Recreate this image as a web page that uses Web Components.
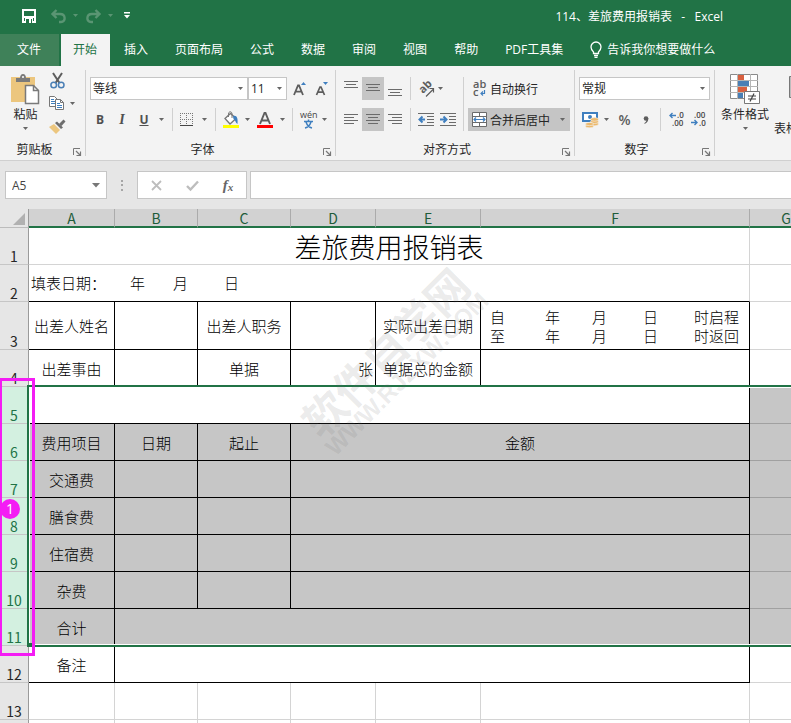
<!DOCTYPE html>
<html lang="zh-CN">
<head>
<meta charset="utf-8">
<title>114、差旅费用报销表 - Excel</title>
<style>
html, body { margin: 0; height: 100%; }
body { font-family: "Open Sans", "Noto Sans CJK SC", sans-serif; font-size: 12px; color: #262626; overflow: hidden; background: #fff; }
</style>
</head>
<body>
<excel-window></excel-window>
<script>
class XlElement extends HTMLElement {
  constructor() {
    super();
    const t = document.createElement('template');
    t.innerHTML = '<style>*{box-sizing:border-box}button,input,select{font:inherit;color:inherit;margin:0;padding:0;border:0;background:none;border-radius:0}button{display:flex;align-items:center;justify-content:center;white-space:nowrap}svg{display:block;flex:none}' + this.css() + '</style>' + this.html();
    this.attachShadow({ mode: 'open' }).append(t.content.cloneNode(true));
  }
  css() { return ':host{display:block}'; }
  html() { return '<slot></slot>'; }
  at(n, d = '') { return this.getAttribute(n) || d; }
}

const H = (x1, x2, y) => `<path d="M${x1} ${y}.5H${x2}" stroke="#6b6b6b" fill="none"/>`;
const ICONS = {
  caret: [7, 4, '<path d="M1 0h5L3.5 3z" fill="#666"/>'],
  caretw: [7, 4, '<path d="M1 0h5L3.5 3z" fill="#5a9573"/>'],
  save: [14, 14, '<path d="M1 1h12v12H1z" fill="none" stroke="#fff" stroke-width="2"/><path d="M2 7h10v2H2zM3 9h8v5H3z" fill="#fff"/><path d="M4 10h6v4H4z" fill="#217346"/><path d="M7 10h2v4H7z" fill="#fff"/>'],
  undo: [15, 14, '<path d="M5.500 1 1.500 5l4 4M2 5h7c6 0 6 8 1 8H8" fill="none" stroke="#5a9573" stroke-width="2.400"/>'],
  redo: [15, 14, '<path d="M9.500 1l4 4-4 4M13 5H6C0 5 0 13 5 13h2" fill="none" stroke="#5a9573" stroke-width="2.400"/>'],
  more: [6, 7, '<path d="M0 0h6v1.500H0zM0 3h6L3 6.500z" fill="#fff"/>'],
  bulb: [12, 17, '<path d="M3.500 12.500V11C2 9.500 1 8 1 6a5 5 0 0 1 10 0c0 2-1 3.500-2.500 5v1.500zM4 14.500h4M4.500 16.300h3" fill="none" stroke="#fff" stroke-width="1.300"/>'],
  paste: [29, 30, '<path d="M0 3h24v25H0z" fill="#ecc67e"/><path d="M5 8V4h4c0-2 1-4 3-4s3 2 3 4h4v4z" fill="#7b7b7b"/><circle cx="12" cy="3" r="1" fill="#fff"/><path d="M14.500 11.500h8l5 5v13h-13z" fill="#fff" stroke="#7a7a7a" stroke-width="1.500"/><path d="M22.500 11.500v5h5" fill="none" stroke="#7a7a7a" stroke-width="1.500"/>'],
  cut: [15, 16, '<path d="M3 0l6.500 10M12 0L5.500 10" stroke="#5d5d5d" stroke-width="2" fill="none"/><circle cx="3.700" cy="12" r="2.800" fill="none" stroke="#4a7fb5" stroke-width="1.500"/><circle cx="11.200" cy="12" r="2.800" fill="none" stroke="#4a7fb5" stroke-width="1.500"/>'],
  copy: [16, 15, '<path d="M.5.5h5l3 3v7h-8z" fill="#fff" stroke="#777"/><path d="M2 3.500h3M2 5.500h4M2 7.500h4" stroke="#3f7fbf"/><path d="M6.500 3.500h5l3 3v7h-8z" fill="#fff" stroke="#777"/><path d="M11.500 3.500v3h3" fill="none" stroke="#777"/><path d="M8 7.500h3M8 9.500h5M8 11.500h5" stroke="#3f7fbf"/>'],
  brush: [17, 15, '<path d="M0 8l5-3 6 6-4 4z" fill="#ecc67e"/><path d="M6 4l2-1.500 6 6L12 10z" fill="#6d6d6d"/><path d="M10 5l4.500-4.500 2 2L12.500 7z" fill="#6d6d6d"/>'],
  launch: [8, 8, '<path d="M.5 7V.5H7" fill="none" stroke="#777"/><path d="M3 3l4 4M7.500 3.500v4h-4" fill="none" stroke="#777" stroke-width="1.200"/>'],
  border: [14, 14, '<path d="M.5 0v13M6.500 0v13M12.500 0v13M0 .5h13M0 6.500h13" fill="none" stroke="#777" stroke-dasharray="1 1"/><path d="M0 12.500h13" stroke="#444"/>'],
  fill: [16, 16, '<path d="M2 6.500L7.500 1.500l5.500 5L7 12z" fill="#fff" stroke="#777" stroke-width="1.300"/><path d="M5.500 5V2c0-3 3.500-3 3.500 0v4" fill="none" stroke="#777"/><path d="M10 4c4-1 5 2 4.500 8-2-1-2-4-4-5z" fill="#3f7fbf"/><path d="M0 13h16v3H0z" fill="#ff0"/>'],
  fcolor: [16, 16, '<path d="M3 12L7.500 1h1L13 12M4.800 8.500h6.400" fill="none" stroke="#5d5d5d" stroke-width="1.900"/><path d="M0 13h16v3H0z" fill="#f00"/>'],
  grow: [14, 17, '<path d="M1 15L5 5.500h1L10 15M2.600 11.700h5.800" fill="none" stroke="#5d5d5d" stroke-width="1.800"/><path d="M8 5l2.500-3L13 5z" fill="#3f7fbf"/>'],
  shrink: [14, 17, '<path d="M1.500 15L5 7h1l3.500 8M3 12.200h5" fill="none" stroke="#5d5d5d" stroke-width="1.700"/><path d="M8 2h5l-2.500 3z" fill="#3f7fbf"/>'],
  top: [14, 16, H(0, 14, 0) + H(2, 12, 3) + H(0, 14, 6)],
  middle: [14, 16, H(0, 14, 3) + H(2, 12, 6) + H(0, 14, 9)],
  bottom: [14, 16, H(0, 14, 8) + H(2, 12, 11) + H(0, 14, 14)],
  left: [14, 14, H(0, 14, 1) + H(0, 10, 4) + H(0, 14, 7) + H(0, 10, 10)],
  center: [14, 14, H(0, 14, 1) + H(2, 12, 4) + H(0, 14, 7) + H(2, 12, 10)],
  right: [14, 14, H(0, 14, 1) + H(4, 14, 4) + H(0, 14, 7) + H(4, 14, 10)],
  orient: [17, 16, '<text transform="translate(5 13) rotate(-45)" font-size="11" font-weight="700" fill="#5d5d5d">ab</text><path d="M8 15.500L15 8.500M11.500 7.500H15.500V11.500" fill="none" stroke="#5d5d5d" stroke-width="1.200"/>'],
  outdent: [16, 14, H(0, 16, 0) + H(9, 16, 3) + H(9, 16, 6) + H(9, 16, 9) + H(0, 16, 12) + '<path d="M7 6.500H2M4.500 3.500l-3 3 3 3" fill="none" stroke="#3f7fbf" stroke-width="2"/>'],
  indent: [16, 14, H(0, 16, 0) + H(9, 16, 3) + H(9, 16, 6) + H(9, 16, 9) + H(0, 16, 12) + '<path d="M0 6.500H5M3.500 3.500l3 3-3 3" fill="none" stroke="#3f7fbf" stroke-width="2"/>'],
  wrap: [13, 16, '<text x="0" y="7" font-size="11" font-weight="600" fill="#5d5d5d">ab</text><text x="0" y="15" font-size="11" font-weight="600" fill="#5d5d5d">c</text><path d="M11.500 9v3.500H8M10 10.500l-2 2 2 2" fill="none" stroke="#3f7fbf" stroke-width="1.200"/>'],
  merge: [15, 15, '<path d="M.5.5h14v14H.5zM0 4.500h15M0 10.500h15M7.500 0v4M7.500 11v4" fill="#fff" stroke="#6b6b6b"/><path d="M2 7.500h11M4 5.500l-2 2 2 2M11 5.500l2 2-2 2" fill="none" stroke="#3f7fbf" stroke-width="1.200"/>'],
  wen: [17, 19, '<text x="0" y="8" font-size="9" fill="#444">wén</text><path d="M4 11.500h9M8.500 9.500v2M6 12c1 3 4 5.500 6 6M11 12c-1 3-4 5.500-6 6" fill="none" stroke="#3f7fbf" stroke-width="1.500"/>'],
  money: [17, 16, '<path d="M1 1h14v8H1z" fill="#fff" stroke="#3f7fbf" stroke-width="2"/><circle cx="8" cy="5" r="2" fill="#3f7fbf"/><g fill="#ecb96c" stroke="#f3f3f3" stroke-width=".6"><ellipse cx="12.500" cy="12" rx="4" ry="1.800"/><ellipse cx="12.500" cy="9.700" rx="4" ry="1.800"/><ellipse cx="12.500" cy="7.400" rx="4" ry="1.800"/><ellipse cx="7.500" cy="14.200" rx="4" ry="1.600"/><ellipse cx="7.500" cy="12" rx="4" ry="1.600"/></g>'],
  comma: [6, 8, '<circle cx="3" cy="2.500" r="2.300" fill="#5d5d5d"/><path d="M5.300 2c.3 3-1.300 5-3.800 6v-1c1.500-1 2-2 2-3.500z" fill="#5d5d5d"/>'],
  decinc: [15, 15, '<text x="8" y="6" font-size="8" font-weight="600" fill="#444">.0</text><text x="3" y="14" font-size="8" font-weight="600" fill="#444">.00</text><path d="M7 3.500H1M3.500 1L1 3.500 3.500 6" fill="none" stroke="#3f7fbf" stroke-width="1.400"/>'],
  decdec: [15, 15, '<text x="3" y="6" font-size="8" font-weight="600" fill="#444">.00</text><text x="8" y="14" font-size="8" font-weight="600" fill="#444">.0</text><path d="M0 10.500H6M3.500 8L6 10.500 3.500 13" fill="none" stroke="#3f7fbf" stroke-width="1.400"/>'],
  cond: [30, 30, '<path d="M.5.500h27v24H.5z" fill="#fff" stroke="#8a8a8a"/><path d="M0 6.500h28M0 12.500h28M0 18.500h28M7.500 0v25M20.500 0v25" stroke="#b5b5b5"/><path d="M8 1h6v5H8zM8 13h9v5H8z" fill="#d9603f"/><path d="M8 7h11v5H8zM8 19h5v5H8z" fill="#4a7fb5"/><path d="M14.500 17.500h15v12h-15z" fill="#fff" stroke="#777"/><path d="M18 22h8M18 25h8M24 19.500l-4 8" stroke="#444" stroke-width="1.200"/>'],
  tablefmt: [28, 30, '<path d="M.5.5h27v21H.5z" fill="#bdbdbd" stroke="#777"/>'],
  cancel: [11, 11, '<path d="M1 1l9 9M10 1l-9 9" stroke="#bdbdbd" stroke-width="1.800"/>'],
  enter: [13, 11, '<path d="M1 6l3.500 3.500L12 1.500" fill="none" stroke="#bdbdbd" stroke-width="2.400"/>'],
  dots: [2, 11, '<path d="M0 0h2v2H0zM0 4h2v2H0zM0 9h2v2H0z" fill="#a6a6a6"/>'],
  ncaret: [8, 5, '<path d="M0 0h8L4 4.500z" fill="#777"/>'],
  corner: [12, 12, '<path d="M12 0v12H0z" fill="#b1b1b1"/>']
};

customElements.define('xl-icon', class extends XlElement {
  css() { return ':host{display:block;flex:none}svg{overflow:visible}'; }
  html() { const [w, h, body] = ICONS[this.at('name')]; return `<svg width="${w}" height="${h}" viewBox="0 0 ${w} ${h}" aria-hidden="true">${body}</svg>`; }
});

customElements.define('tool-button', class extends XlElement {
  css() { return `:host{display:block;flex:none;width:${this.at('w', '22')}px;height:23px}:host([on]){background:#c5c5c5}button{width:100%;height:100%}`; }
  html() { return `<button type="button" aria-label="${this.at('label')}"><slot><xl-icon name="${this.at('icon', 'caret')}"></xl-icon></slot></button>`; }
});

customElements.define('tool-sep', class extends XlElement {
  css() { return `:host{flex:none;display:flex;justify-content:center;width:${this.at('w', '9')}px}i{width:1px;background:#d0d0d0}`; }
  html() { return '<i></i>'; }
});

customElements.define('wide-button', class extends XlElement {
  css() { return ':host{display:block;height:23px}:host([on]){background:#c5c5c5}button{width:100%;height:100%;justify-content:flex-start}.i{width:22px;display:flex;justify-content:center}.c{margin-left:auto;margin-right:4px}'; }
  html() { return `<button type="button"><span class="i"><xl-icon name="${this.at('icon')}"></xl-icon></span><slot></slot>${this.hasAttribute('menu') ? '<xl-icon class="c" name="caret"></xl-icon>' : ''}</button>`; }
});

customElements.define('drop-box', class extends XlElement {
  css() { return `:host{display:grid;flex:none;width:${this.at('w')}px;height:23px;background:#fff;border:1px solid #c6c6c6}select,xl-icon{grid-area:1/1}select{appearance:none;width:100%;padding-left:2px;outline:0}xl-icon{justify-self:end;align-self:center;margin-right:3px;pointer-events:none}`; }
  html() { return `<select aria-label="${this.at('label')}"><option>${this.at('value')}</option></select><xl-icon name="caret"></xl-icon>`; }
});

customElements.define('title-bar', class extends XlElement {
  css() { return ':host{display:flex;align-items:center;height:34px;padding:0 68px 3px 18px;background:#217346;color:#fff}button{height:22px}.save{width:22px;margin-right:7px}.un{width:22px}.c{width:13px}h1{font:inherit;margin:0 0 0 auto;white-space:pre}.m{width:20px}'; }
  html() { return '<button class="save" aria-label="保存"><xl-icon name="save"></xl-icon></button><button class="un" aria-label="撤消"><xl-icon name="undo"></xl-icon></button><button class="c" aria-label="撤消列表"><xl-icon name="caretw"></xl-icon></button><button class="un" aria-label="恢复"><xl-icon name="redo"></xl-icon></button><button class="c" aria-label="恢复列表"><xl-icon name="caretw"></xl-icon></button><button class="m" aria-label="自定义"><xl-icon name="more"></xl-icon></button><h1>114、差旅费用报销表   -   Excel</h1>'; }
});

customElements.define('ribbon-tabs', class extends XlElement {
  css() { return ':host{display:flex;gap:2px;height:32px;background:#217346;color:#fff}button{padding:0 13px 2px 12px}.file{padding:0 18px 2px 17px;background:#3f8159}.on{background:#f3f3f3;color:#217346}.tell{gap:5px}'; }
  html() { return '<button class="file">文件</button><button class="on">开始</button>' + ['插入', '页面布局', '公式', '数据', '审阅', '视图', '帮助', 'PDF工具集'].map(t => `<button>${t}</button>`).join('') + '<button class="tell"><xl-icon name="bulb"></xl-icon>告诉我你想要做什么</button>'; }
});

customElements.define('ribbon-group', class extends XlElement {
  css() { return `:host{display:flex;flex-direction:column;flex:none;width:${this.at('w')}px;height:86px;border-right:1px solid #d0d0d0}.b{height:72px;padding:7px 0 0 ${this.at('pad', '3')}px}.f{display:flex;height:14px}.f span{flex:1;text-align:center;line-height:15px}.f button{width:16px;height:14px;align-items:flex-end}`; }
  html() { return `<div class="b"><slot></slot></div><div class="f"><span>${this.at('label')}</span><button aria-label="${this.at('label')}设置"><xl-icon name="launch"></xl-icon></button></div>`; }
});

customElements.define('big-button', class extends XlElement {
  css() { return `:host{display:block;flex:none;width:${this.at('w')}px}button{flex-direction:column;width:100%;justify-content:flex-start}span{line-height:17px;margin-top:2px}.c{margin-top:4px}`; }
  html() { return `<button type="button"><xl-icon name="${this.at('icon')}"></xl-icon><span><slot></slot></span><xl-icon class="c" name="caret"></xl-icon></button>`; }
});

customElements.define('ribbon-panel', class extends XlElement {
  css() { return `:host{display:flex;height:95px;padding-top:4px;background:#f3f3f3;border-bottom:1px solid #d0d0d0;overflow:hidden}
  .row{display:flex;height:23px}.row+.row{margin-top:8px}.split{display:flex}.clip{display:flex;margin-top:-3px}.side{display:grid;grid-template:23px 23px 23px/18px 12px;margin-top:-5px}
  .l{width:119px}.r{width:102px}.r>*+*{margin-top:8px}b,i,u{font-size:12px;color:#505050;font-weight:700}i{font-family:"Liberation Serif",serif;font-size:14px}.boxes{margin-left:1px}.pct{font-size:14px;font-weight:600;color:#5d5d5d}
  .styles{display:flex;flex:1;min-width:0;overflow:hidden;padding:4px 0 0 1px}.fmt{flex-direction:column;margin-top:2px;align-items:center;justify-content:flex-start}.fmt span{margin-top:14px;line-height:17px}.fmt xl-icon{margin-left:10px}`; }
  html() { return `
  <ribbon-group w="86" label="剪贴板" pad="3"><div class="clip"><big-button w="45" icon="paste">粘贴</big-button><div class="side"><tool-button w="18" icon="cut" label="剪切"></tool-button><span></span><tool-button w="18" icon="copy" label="复制"></tool-button><tool-button w="12" label="复制选项"></tool-button><tool-button w="18" icon="brush" label="格式刷"></tool-button></div></div></ribbon-group>
  <ribbon-group w="250" label="字体">
    <div class="row"><drop-box class="boxes" w="158" value="等线" label="字体"></drop-box><drop-box w="39" value="11" label="字号"></drop-box><tool-sep w="2" style="visibility:hidden"></tool-sep><tool-button icon="grow" label="增大字号"></tool-button><tool-button icon="shrink" label="减小字号"></tool-button></div>
    <div class="row"><tool-button label="加粗"><b>B</b></tool-button><tool-button label="倾斜"><i>I</i></tool-button><tool-button label="下划线"><u>U</u></tool-button><tool-button w="12" label="下划线选项"></tool-button><tool-sep w="11"></tool-sep><tool-button w="18" icon="border" label="边框"></tool-button><tool-button w="17" label="边框选项"></tool-button><tool-sep w="5"></tool-sep><tool-button w="25" icon="fill" label="填充颜色"></tool-button><tool-button w="9" label="填充选项"></tool-button><tool-button w="26" icon="fcolor" label="字体颜色"></tool-button><tool-button w="8" label="颜色选项"></tool-button><tool-sep w="13"></tool-sep><tool-button w="19" icon="wen" label="拼音"></tool-button><tool-button w="12" label="拼音选项"></tool-button></div>
  </ribbon-group>
  <ribbon-group w="239" label="对齐方式" pad="4"><div class="split"><div class="l">
    <div class="row"><tool-button icon="top" label="顶端对齐"></tool-button><tool-button on icon="middle" label="垂直居中"></tool-button><tool-button icon="bottom" label="底端对齐"></tool-button><tool-sep></tool-sep><tool-button icon="orient" label="方向"></tool-button><tool-button w="7" label="方向选项"></tool-button></div>
    <div class="row"><tool-button icon="left" label="左对齐"></tool-button><tool-button on icon="center" label="居中"></tool-button><tool-button icon="right" label="右对齐"></tool-button><tool-sep></tool-sep><tool-button icon="outdent" label="减少缩进"></tool-button><tool-button icon="indent" label="增加缩进"></tool-button></div></div>
    <tool-sep></tool-sep><div class="r"><wide-button icon="wrap">自动换行</wide-button><wide-button on menu icon="merge">合并后居中</wide-button></div></div></ribbon-group>
  <ribbon-group w="140" label="数字" pad="4">
    <div class="row"><drop-box w="131" value="常规" label="数字格式"></drop-box></div>
    <div class="row"><tool-button icon="money" label="会计数字格式"></tool-button><tool-button w="10" label="会计格式选项"></tool-button><tool-button w="27" label="百分比"><span class="pct">%</span></tool-button><tool-button w="16" icon="comma" label="千位分隔"></tool-button><tool-sep w="13"></tool-sep><tool-button w="18" icon="decinc" label="增加小数位数"></tool-button><tool-button w="27" icon="decdec" label="减少小数位数"></tool-button></div></ribbon-group>
  <div class="styles"><big-button w="58" icon="cond">条件格式</big-button><button class="fmt"><xl-icon name="tablefmt"></xl-icon><span>表格格式</span></button></div>`; }
});

customElements.define('formula-bar', class extends XlElement {
  css() { return ':host{display:flex;height:48px;padding:10px 0 10px 5px;background:#e6e6e6}.box{display:flex;align-items:center;background:#fff;border:1px solid #c6c6c6}.n{width:102px;color:#444}.n input{flex:1;min-width:0;padding-left:6px;outline:0}.n button{width:20px;height:26px}.d{width:30px;display:flex;align-items:center;justify-content:center}.t{width:110px}.t button{flex:1;height:26px}.f{flex:1;margin-left:3px;border-right:0}.f input{width:100%;height:26px;outline:0}em{font:italic 700 15px "Liberation Serif",serif;color:#666}sub{font-size:11px;vertical-align:-1px}'; }
  html() { return '<div class="box n"><input aria-label="名称框" value="A5"><button aria-label="名称列表"><xl-icon name="ncaret"></xl-icon></button></div><div class="d"><xl-icon name="dots"></xl-icon></div><div class="box t"><button aria-label="取消"><xl-icon name="cancel"></xl-icon></button><button aria-label="输入"><xl-icon name="enter"></xl-icon></button><button aria-label="插入函数"><em>f<sub>x</sub></em></button></div><div class="box f"><input aria-label="编辑栏"></div>'; }
});

customElements.define('step-callout', class extends XlElement {
  css() { return ':host{position:absolute;border:3px solid #f41cf4;display:block}b{position:absolute;left:-2px;top:118px;width:20px;height:20px;border-radius:50%;background:#f41cf4;color:#fff;font:14px/20px "Open Sans",sans-serif;text-align:center}'; }
  html() { return '<b><slot></slot></b>'; }
});

customElements.define('water-mark', class extends XlElement {
  css() { return ':host{position:absolute;width:240px;text-align:center;transform:rotate(-45deg);color:rgba(110,110,110,.14);font-weight:700;pointer-events:none;white-space:nowrap}div{font-size:43px;line-height:44px}p{margin:-4px 0 0;font-size:24px;line-height:24px;font-family:"Liberation Sans",sans-serif}'; }
  html() { return '<div>软件自学网</div><p>WWW.RJZXW.COM</p>'; }
});

const tr = (n, h, cells, cls = '') => `<tr class="${cls}" style="height:${h}px"><th scope="row">${n}</th>${cells}</tr>`;
customElements.define('sheet-grid', class extends XlElement {
  css() { return `:host{display:block;position:relative;flex:1;overflow:hidden;background:#fff;font-size:15px;color:#000}
  table{border-collapse:separate;border-spacing:0;table-layout:fixed;width:100%;min-width:823px;font-family:"Noto Sans CJK SC",sans-serif;font-weight:300}
  td,th{padding:0;border-right:1px solid #d4d4d4;border-bottom:1px solid #d4d4d4;white-space:nowrap;line-height:19px}
  td{text-align:center}
  thead th{height:19px;background:#d2d2d2;color:#1e5c3a;border-right-color:#ababab;border-bottom:2px solid #217346;line-height:16px;padding-top:1px;font-size:14px;font-weight:400}
  thead th:first-child{background:#e6e6e6;border-bottom:1px solid #bcbcbc;border-right-color:#9a9a9a}.k{display:flex;justify-content:flex-end;padding:1px 3px 0 0}
  tbody th{background:#e6e6e6;border-right-color:#9a9a9a;border-bottom-color:#c6c6c6;vertical-align:bottom;line-height:14px;padding-bottom:1px;color:#262626;font-size:14px;font-weight:400}
  .k1 td.x,.x2{border-color:#000}.x2{border-right-color:#d4d4d4;padding-bottom:2px}
  .sel th{background:#d3f0e0;color:#217346}.sel td{background:#c6c6c6}.sel td:last-child{border-color:#a0a0a0}.sel td.act{background:#fff}
  .k1 td{padding-top:1px}.k1.two td{padding:0}
  .title{font-size:27px;line-height:34px;padding-top:1px}.k1 td.r{text-align:right;padding-right:2px}
  .date,.trip{display:grid;text-align:left}.date{grid-template-columns:99px 43px 51px auto;padding-left:2px}.trip{grid-template-columns:55px 47px 51px 51px auto;padding-left:9px}
  .range{position:absolute;left:27px;right:-4px;top:176px;height:262px;border:2px solid #217346;box-shadow:inset 0 0 0 1px #fff;pointer-events:none}.range i{position:absolute;left:-2px;bottom:-2px;width:5px;height:4px;background:#217346}
  step-callout{left:-1px;top:169px;width:36px;height:278px}water-mark{left:273px;top:119px}`; }
  html() {
    const x = (t = '', s = 1, c = '') => `<td class="x ${c}" colspan="${s}">${t}</td>`, g = '<td></td>';
    return `<table><colgroup>${[29, 86, 83, 93, 85, 105, 269].map(w => `<col style="width:${w}px">`).join('')}<col></colgroup>
    <thead><tr><th><div class="k"><xl-icon name="corner"></xl-icon></div></th>${[...'ABCDEFG'].map(c => `<th scope="col">${c}</th>`).join('')}</tr></thead><tbody>
    ${tr(1, 37, '<td class="title" colspan="6">差旅费用报销表</td>' + g)}
    ${tr(2, 37, '<td class="x2" colspan="6"><div class="date"><span>填表日期：</span><span>年</span><span>月</span><span>日</span></div></td>' + g)}
    ${tr(3, 48, x('出差人姓名') + x() + x('出差人职务') + x() + x('实际出差日期') + x('<div class="trip"><span>自</span><span>年</span><span>月</span><span>日</span><span>时启程</span><span>至</span><span>年</span><span>月</span><span>日</span><span>时返回</span></div>') + g, 'k1 two')}
    ${tr(4, 37, x('出差事由') + x() + x('单据') + x('张', 1, 'r') + x('单据总的金额') + x() + g, 'k1')}
    ${tr(5, 37, x('', 6, 'act') + g, 'k1 sel')}
    ${tr(6, 37, x('费用项目') + x('日期') + x('起止') + x('金额', 3) + g, 'k1 sel')}
    ${['交通费', '膳食费', '住宿费', '杂费'].map((t, i) => tr(7 + i, 37, x(t) + x() + x() + x('', 3) + g, 'k1 sel')).join('')}
    ${tr(11, 37, x('合计') + x('', 5) + g, 'k1 sel')}
    ${tr(12, 37, x('备注') + x('', 5) + g, 'k1')}
    ${tr(13, 37, g.repeat(7))}${tr('', 37, g.repeat(7))}</tbody></table>
    <div class="range"><i></i></div><water-mark></water-mark><step-callout>1</step-callout>`;
  }
});

customElements.define('excel-window', class extends XlElement {
  css() { return ':host{display:flex;flex-direction:column;height:100vh;overflow:hidden}'; }
  html() { return '<title-bar></title-bar><ribbon-tabs></ribbon-tabs><ribbon-panel></ribbon-panel><formula-bar></formula-bar><sheet-grid></sheet-grid>'; }
});
</script>
</body>
</html>
